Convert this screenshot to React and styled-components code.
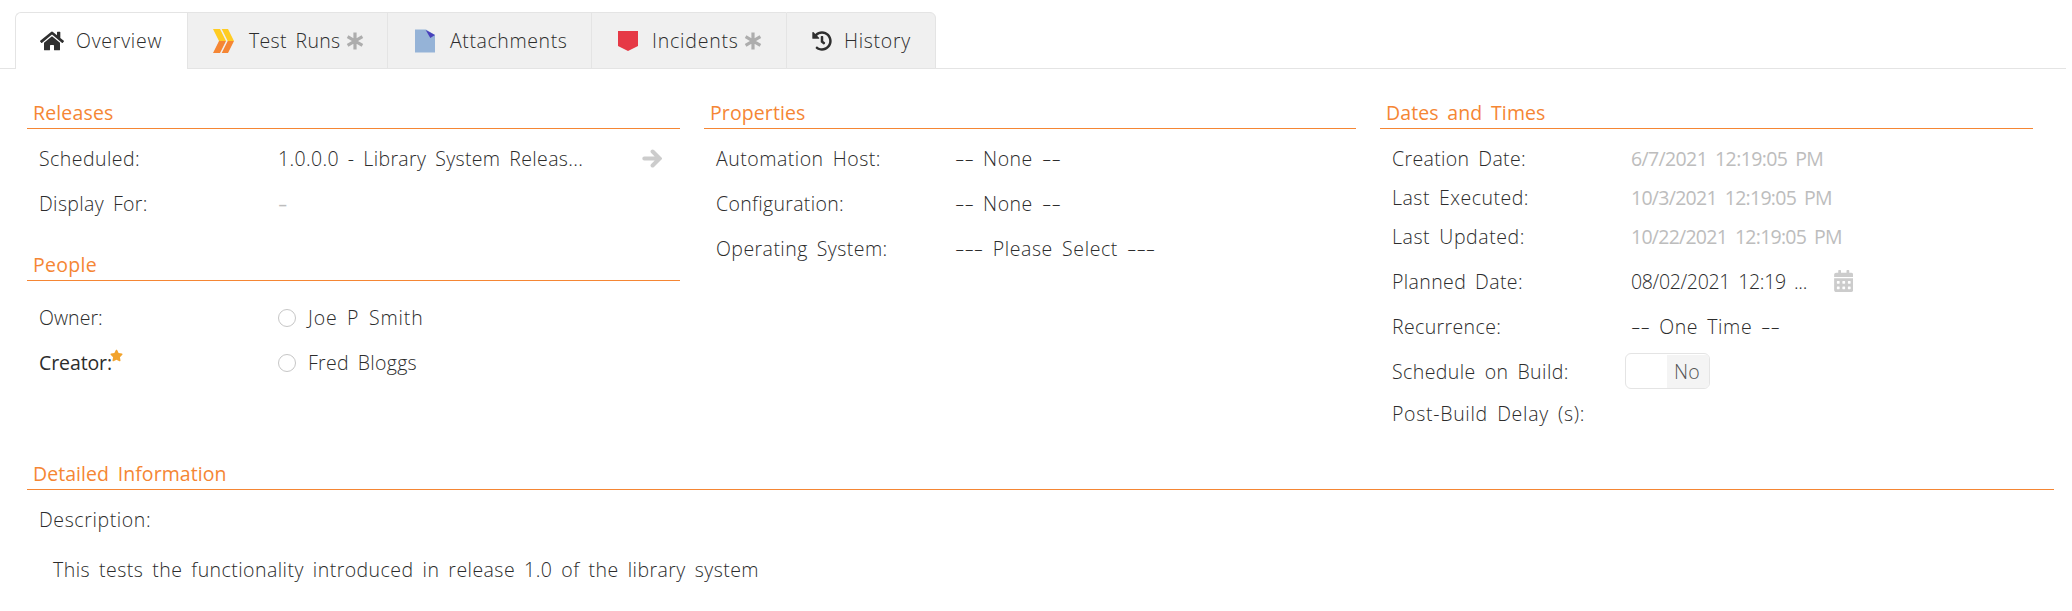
import React from "react";
import styled, { createGlobalStyle } from "styled-components";
import { FaHome, FaHistory, FaCalendarAlt, FaStar } from "react-icons/fa";

const GlobalStyle = createGlobalStyle`
  * { box-sizing: border-box; }
  body {
    margin: 0;
    background: #fff;
    color: #2c2c2c;
    font: 300 19.5px "Open Sans", "Noto Sans", sans-serif;
    word-spacing: 3.5px;
  }
`;

const Page = styled.main`
  width: 2072px;
  height: 611px;
  padding-top: 12px;
  background: #fff;
`;

const TabBar = styled.nav`
  display: flex;
  width: 2066px;
  height: 57px;
  padding-left: 15px;
  box-shadow: inset 0 -1px #e4e4e4;
`;

const Tab = styled.button`
  display: flex;
  align-items: center;
  width: ${(p) => p.$width}px;
  height: 57px;
  padding: 0 0 0 ${(p) => p.$pad}px;
  border: solid #e4e4e4;
  border-width: 1px 0 ${(p) => (p.$active ? 0 : 1)}px 1px;
  background: ${(p) => (p.$active ? "#fff" : "#f0f0f0")};
  color: inherit;
  font: inherit;
  word-spacing: inherit;

  &:first-child { border-top-left-radius: 6px; }
  &:last-child { border-right-width: 1px; border-top-right-radius: 6px; }
`;

const TabIcon = styled.span`
  display: flex;
  flex: none;
  align-items: center;
  width: ${(p) => p.$width}px;
  color: #2f2f2f;

  svg { flex: none; display: block; }
`;

const Text = styled.span`
  flex: none;
  line-height: 28px;
  white-space: nowrap;
  letter-spacing: ${(p) => p.$track || 0}px;
`;

const Dashes = styled.span`
  display: inline-block;
  width: ${(p) => p.children.length * 9.5}px;
  letter-spacing: 0;
  transform: scaleX(1.5);
  transform-origin: left;
`;

const Mark = styled.svg`
  flex: none;
  margin-left: 5px;
`;

const Columns = styled.div`
  display: grid;
  grid-template-columns: 653px 652px 653px;
  column-gap: 24px;
  height: 389px;
  padding: 28px 0 0 27px;
`;

const Column = styled.section``;

const Details = styled.section`
  width: 2027px;
  margin-left: 27px;
`;

const Heading = styled.h2`
  height: 32px;
  margin: ${(p) => p.$above || 0}px 0 ${(p) => p.$below}px;
  padding-left: 6px;
  border-bottom: 1px solid #f58634;
  color: #f58634;
  font-size: inherit;
  font-weight: 400;
  line-height: 31px;
  letter-spacing: ${(p) => p.$track || 0}px;
`;

const Row = styled.div`
  display: flex;
  align-items: center;
  height: ${(p) => (p.$compact ? 39 : 45)}px;
  margin-top: ${(p) => p.$above || 0}px;
  padding-left: ${(p) => p.$indent || 12}px;
`;

const Label = styled.div`
  display: flex;
  flex: none;
  width: 239px;
  font-weight: ${(p) => (p.$required ? 500 : 300)};
`;

const Value = styled.div`
  display: flex;
  align-items: center;
  flex: 1;
  color: ${(p) => (p.$muted ? "#bdbdbd" : "inherit")};
  font-weight: ${(p) => (p.$muted ? 400 : 300)};
`;

const RequiredStar = styled(FaStar)`
  width: 13px;
  height: 13px;
  margin: 0 0 0 -2px;
  color: #f2a32c;
`;

const Avatar = styled.span`
  width: 18px;
  height: 18px;
  margin: 1px 12px 0 0;
  border: 1px solid #c6c6c6;
  border-radius: 50%;
`;

const GoArrow = styled.svg`
  margin: 0 18px 0 auto;
`;

const CalendarIcon = styled(FaCalendarAlt)`
  width: 19.5px;
  height: 22px;
  margin: -2px 0 0 27px;
  color: #ccc;
`;

const Toggle = styled.button`
  display: flex;
  justify-content: flex-end;
  width: 85px;
  height: 36px;
  margin: -1px 0 0 -6px;
  padding: 1px 0 0;
  overflow: hidden;
  border: 1px solid #e4e4e4;
  border-radius: 6px;
  background: #fff;
  color: #555;
  font: inherit;
`;

const ToggleState = styled.span`
  display: flex;
  align-items: center;
  width: 42px;
  height: 33px;
  padding-left: 7px;
  background: #f4f4f4;
`;

const RunsIcon = () => (
  <svg width="21" height="24" viewBox="0 0 21 24">
    <path fill="#ffcc22" d="M0 0h7l6 12H6zM8.700 0H15l6 12h-6.300z" />
    <path fill="#f58634" d="M6 12h7L7 24H0zM14.700 12H21l-6 12H8.700z" />
  </svg>
);

const FileIcon = () => (
  <svg width="20" height="24" viewBox="0 0 20 24">
    <path fill="#95b3d7" d="M0 .5h11L20 6v17.500H0z" />
    <path fill="#4840bb" d="M10.700 1 20 6l-4.700 3z" />
  </svg>
);

const IncidentIcon = () => (
  <svg width="20" height="20" viewBox="0 0 20 20">
    <path fill="#e63946" d="M0 0h20v15l-10 5-10-5z" />
  </svg>
);

const Asterisk = () => (
  <Mark width="18" height="18" viewBox="0 0 18 18" stroke="#adadad" strokeWidth="3.2">
    <path d="M9 .5v17M1.600 4.700l14.800 8.600M16.400 4.700 1.600 13.300" />
  </Mark>
);

const Arrow = () => (
  <GoArrow width="20" height="20" viewBox="0 0 20 20" fill="none" stroke="#ccc" strokeWidth="4" strokeLinecap="round">
    <path d="M2.300 9.500h15M10.600 2.500 17.600 9.500l-7 7" />
  </GoArrow>
);

const Field = ({ label, track, required, children, muted, compact, above }) => (
  <Row $compact={compact} $above={above}>
    <Label $required={required}>
      <Text $track={track}>{label}</Text>
      {required && <RequiredStar />}
    </Label>
    <Value $muted={muted}>{children}</Value>
  </Row>
);

const Placeholder = ({ dashes = "--", track, children }) => (
  <Text $track={track}>
    <Dashes>{dashes}</Dashes> {children} <Dashes>{dashes}</Dashes>
  </Text>
);

export default function App() {
  return (
    <>
      <GlobalStyle />
      <Page>
        <TabBar>
          <Tab $active $width={172} $pad={24}>
            <TabIcon $width={36}><FaHome size={24} /></TabIcon>
            <Text $track={0.75}>Overview</Text>
          </Tab>
          <Tab $width={200} $pad={25}>
            <TabIcon $width={36}><RunsIcon /></TabIcon>
            <Text $track={0.3}>Test Runs</Text>
            <Asterisk />
          </Tab>
          <Tab $width={204} $pad={27}>
            <TabIcon $width={35}><FileIcon /></TabIcon>
            <Text $track={0.6}>Attachments</Text>
          </Tab>
          <Tab $width={195} $pad={26}>
            <TabIcon $width={34}><IncidentIcon /></TabIcon>
            <Text $track={0.8}>Incidents</Text>
            <Asterisk />
          </Tab>
          <Tab $width={150} $pad={25}>
            <TabIcon $width={32}><FaHistory size={20} /></TabIcon>
            <Text $track={0.7}>History</Text>
          </Tab>
        </TabBar>

        <Columns>
          <Column>
            <Heading $below={7} $track={0.15}>Releases</Heading>
            <Field label="Scheduled:" track={0.45}>
              <Text $track={0.35}>1.0.0.0 - Library System Releas...</Text>
              <Arrow />
            </Field>
            <Field label="Display For:" track={0.35} muted>
              <Text><Dashes>-</Dashes></Text>
            </Field>
            <Heading $above={23} $below={14} $track={0.3}>People</Heading>
            <Field label="Owner:" track={0.05}>
              <Avatar />
              <Text $track={0.9}>Joe P Smith</Text>
            </Field>
            <Field label="Creator:" track={-0.1} required>
              <Avatar />
              <Text $track={0.3}>Fred Bloggs</Text>
            </Field>
          </Column>

          <Column>
            <Heading $below={7} $track={0.1}>Properties</Heading>
            <Field label="Automation Host:" track={0.5}>
              <Placeholder track={0.5}>None</Placeholder>
            </Field>
            <Field label="Configuration:" track={0.33}>
              <Placeholder track={0.5}>None</Placeholder>
            </Field>
            <Field label="Operating System:" track={0.45}>
              <Placeholder dashes="---" track={0.6}>Please Select</Placeholder>
            </Field>
          </Column>

          <Column>
            <Heading $below={10} $track={0.1}>Dates and Times</Heading>
            <Field compact muted label="Creation Date:" track={0.35}>
              <Text $track={-0.63}>6/7/2021 12:19:05 PM</Text>
            </Field>
            <Field compact muted label="Last Executed:" track={0.5}>
              <Text $track={-0.72}>10/3/2021 12:19:05 PM</Text>
            </Field>
            <Field compact muted label="Last Updated:" track={0.57}>
              <Text $track={-0.74}>10/22/2021 12:19:05 PM</Text>
            </Field>
            <Field above={3} label="Planned Date:" track={0.38}>
              <Text $track={-0.33}>08/02/2021 12:19 ...</Text>
              <CalendarIcon />
            </Field>
            <Field label="Recurrence:" track={0.38}>
              <Placeholder track={0.6}>One Time</Placeholder>
            </Field>
            <Field label="Schedule on Build:" track={0.42}>
              <Toggle>
                <ToggleState><Text $track={0.3}>No</Text></ToggleState>
              </Toggle>
            </Field>
            <Field compact label="Post-Build Delay (s):" track={0.7} />
          </Column>
        </Columns>

        <Details>
          <Heading $below={10} $track={0.06}>Detailed Information</Heading>
          <Row $compact><Text $track={0.6}>Description:</Text></Row>
          <Row $compact $above={11} $indent={26}>
            <Text $track={0.45}>This tests the functionality introduced in release 1.0 of the library system</Text>
          </Row>
        </Details>
      </Page>
    </>
  );
}
